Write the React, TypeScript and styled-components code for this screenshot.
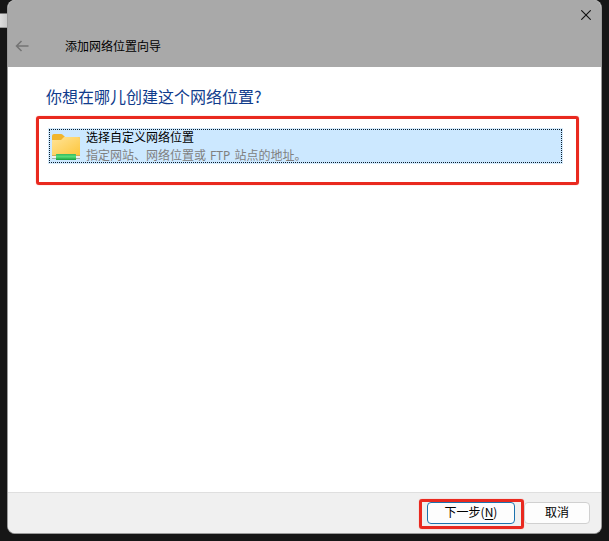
import React from "react";
import styled, { createGlobalStyle } from "styled-components";

const GlobalStyle = createGlobalStyle`
  * { box-sizing: border-box; }
  body {
    margin: 0;
    background: #161616;
    overflow: hidden;
    font-family: "Noto Sans CJK SC", "Noto Sans", sans-serif;
    font-size: 12px;
    color: #000;
  }
`;

const Desktop = styled.main`
  display: flex;
  width: 609px;
  height: 541px;
  background: #161616;
`;

const BackgroundEdge = styled.div`
  width: 7px;
  height: 15px;
  margin-top: 13px;
  background: linear-gradient(90deg, #dedede, #cacaca);
  border-top: 1px solid #777;
  border-bottom: 1px solid #999;
`;

const Window = styled.section`
  display: flex;
  flex-direction: column;
  width: 595px;
  height: 534px;
  border: 1px solid #9b9b9b;
  border-top: 0;
  border-radius: 8px;
  background: #fff;
  overflow: hidden;
`;

const Header = styled.header`
  flex: 0 0 67px;
  margin: 0 -1px;
  background: #a9a9a9;
`;

const CloseBar = styled.div`
  display: flex;
  justify-content: flex-end;
  align-items: flex-start;
  height: 30px;
  padding: 10px 11px 0 0;
`;

const TitleBar = styled.div`
  display: flex;
  align-items: center;
  gap: 36px;
  height: 32px;
  padding-left: 8px;
`;

const IconButton = styled.button`
  display: block;
  padding: 0;
  border: 0;
  background: none;
  line-height: 0;
`;

const Title = styled.span`
  line-height: 18px;
`;

const Content = styled.div`
  flex: 1;
  padding: 17px 22px 0 28px;
`;

const Heading = styled.h1`
  margin: 0 0 8px 10px;
  font-size: 16px;
  font-weight: 400;
  line-height: 24px;
  color: #103c8c;
`;

const Highlight = styled.div<{ $compact?: boolean }>`
  width: ${(p) => (p.$compact ? 105 : 543)}px;
  height: ${(p) => (p.$compact ? 30 : 69)}px;
  padding: ${(p) => (p.$compact ? "0 5px" : "9px")};
  border: 3px solid #e9291f;
  border-radius: 3px;
  box-shadow: 0 0 1px #ff6b62;
`;

const Choice = styled.div`
  width: 515px;
  height: 36px;
  background: #cce8ff;
  border: 1px solid #d5ebfc;
`;

const ChoiceFocus = styled.div`
  display: flex;
  height: 34px;
  padding: 0 0 0 2px;
  gap: 4px;
  border: 1px dotted #0a1c2c;
`;

const FolderSvg = styled.svg`
  flex: none;
  width: 30px;
  height: 32px;
`;

const ChoiceText = styled.div`
  display: flex;
  flex-direction: column;
`;

const ChoiceTitle = styled.span`
  flex: 0 0 17px;
  line-height: 14px;
`;

const Detail = styled.span`
  flex: none;
  line-height: 17px;
  color: #808080;
  font-family: "Noto Sans", "Noto Sans CJK SC", sans-serif;
  word-spacing: 1px;
`;

const Footer = styled.footer`
  display: flex;
  flex: 0 0 41px;
  padding: 6px 0 0 411px;
  border-top: 1px solid #dfdfdf;
  background: #f0f0f0;
`;

const Button = styled.button`
  width: 66px;
  height: 22px;
  padding: 0 0 2px;
  margin: 3px 0 0;
  border: 1px solid #d0d0d0;
  border-radius: 4px;
  background: #fdfdfd;
  color: #000;
  font: 12px/18px "Noto Sans CJK SC", sans-serif;
`;

const PrimaryButton = styled(Button)`
  display: block;
  width: 88px;
  margin: 0;
  border-color: #1c72ae;
`;

const Mnemonic = styled.span`
  text-decoration: underline;
  text-underline-offset: 2px;
`;

function NetworkFolder() {
  return (
    <FolderSvg viewBox="0 0 30 32" aria-hidden="true">
      <defs>
        <linearGradient id="folder" x1="0" y1="0" x2="1" y2="1">
          <stop offset="0" stopColor="#ffe498" />
          <stop offset="1" stopColor="#fdc63c" />
        </linearGradient>
        <linearGradient id="cable" x1="0" y1="0" x2="0" y2="1">
          <stop offset="0" stopColor="#35b961" />
          <stop offset="0.45" stopColor="#59df7a" />
          <stop offset="1" stopColor="#169c3c" />
        </linearGradient>
      </defs>
      <path d="M0 6Q0 4 2 4H9Q10 4 11 5L13 7H27Q28 7 28 9V15H0Z" fill="#f1b52c" />
      <path d="M0 10H9L12 7H26Q28 7 28 9V25H0Z" fill="url(#folder)" />
      <path d="M0 25H28V29H0Z" fill="#edf3ef" />
      <path d="M0 25.5H28" stroke="#d1a957" />
      <path d="M0 28.5H28" stroke="#a5b0a9" />
      <rect x="4" y="24" width="20" height="6" rx="0.6" fill="url(#cable)" />
    </FolderSvg>
  );
}

export default function App() {
  return (
    <>
      <GlobalStyle />
      <Desktop>
        <BackgroundEdge />
        <Window>
          <Header>
            <CloseBar>
              <IconButton aria-label="关闭">
                <svg width="10" height="10" viewBox="0 0 10 10">
                  <path d="M.3.3 9.7 9.7M9.7.3.3 9.7" stroke="#111" strokeWidth="1.1" />
                </svg>
              </IconButton>
            </CloseBar>
            <TitleBar>
              <IconButton aria-label="返回">
                <svg width="14" height="12" viewBox="0 0 14 12">
                  <path d="M6.5 1 1.5 6l5 5M1.5 6h12" fill="none" stroke="#747474" strokeWidth="1.5" />
                </svg>
              </IconButton>
              <Title>添加网络位置向导</Title>
            </TitleBar>
          </Header>
          <Content>
            <Heading>你想在哪儿创建这个网络位置?</Heading>
            <Highlight>
              <Choice>
                <ChoiceFocus>
                  <NetworkFolder />
                  <ChoiceText>
                    <ChoiceTitle>选择自定义网络位置</ChoiceTitle>
                    <Detail>指定网站、网络位置或 FTP 站点的地址。</Detail>
                  </ChoiceText>
                </ChoiceFocus>
              </Choice>
            </Highlight>
          </Content>
          <Footer>
            <Highlight $compact>
              <PrimaryButton>
                下一步(<Mnemonic>N</Mnemonic>)
              </PrimaryButton>
            </Highlight>
            <Button>取消</Button>
          </Footer>
        </Window>
      </Desktop>
    </>
  );
}
